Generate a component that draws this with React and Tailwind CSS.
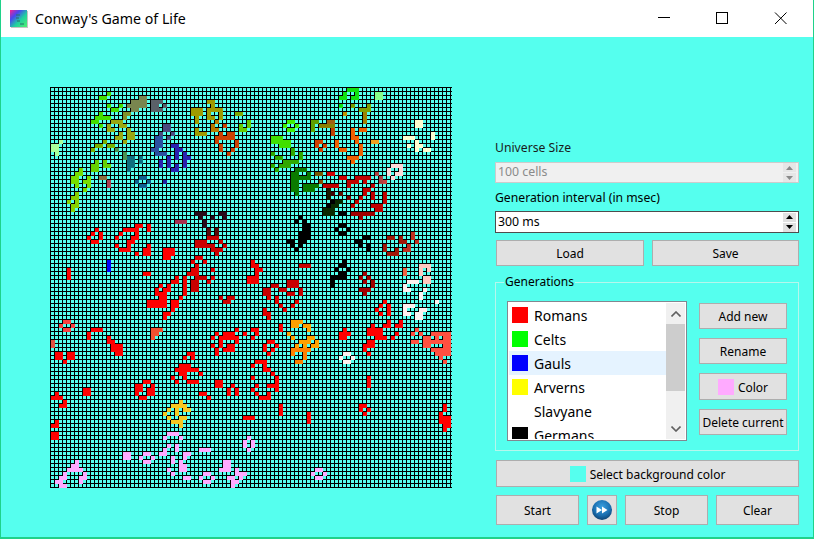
// colour, then "col row w h" runs of live cells
const cells = [
  ["#44dd00", "12 2 2 1,14 1 1 1,14 4 1 1,15 5 2 1,17 4 1 1"],
  ["#44e000", "12 6 1 1,11 7 4 1,10 8 2 1,12 9 1 1"],
  ["#79864f", "22 2 2 3,20 3 2 3,19 4 1 1"],
  ["#80902a", "18 6 2 1,18 7 1 1"],
  ["#5a6068", "25 3 3 1,25 4 2 1,28 4 1 1,25 5 3 1"],
  ["#9f9a00", "35 5 3 2,36 7 1 2,36 10 1 1,36 11 3 1,39 3 2 1,40 4 1 1,39 5 4 1,39 6 1 2,40 7 1 1,42 6 1 2"],
  ["#b87a00", "41 8 1 1,40 9 1 2,41 10 1 1"],
  ["#cc4000", "43 9 1 1,42 11 1 1,44 11 2 1,41 12 4 1,45 12 1 1,41 13 1 1,46 13 1 2,42 14 1 2,45 15 1 1,44 16 1 1"],
  ["#80aa00", "46 6 2 1"],
  ["#66cc00", "47 10 2 1,47 9 1 1,49 8 1 2"],
  ["#9aa810", "15 8 3 1,14 9 1 2,15 10 1 1,17 9 2 1,17 11 1 2,16 12 1 1,19 10 1 1,19 11 2 2,18 13 1 1"],
  ["#aaff99", "0 14 2 2,1 16 1 1,2 13 1 1"],
  ["#78b000", "13 13 1 1,11 14 2 1,14 14 2 1,10 15 1 1"],
  ["#4a9050", "16 15 1 1,18 16 1 2"],
  ["#0f6f80", "19 17 2 3,19 20 1 1,22 17 1 2"],
  ["#66d000", "11 18 1 1,10 19 2 2,13 18 1 1,13 19 2 1"],
  ["#77dd00", "7 20 1 1,6 21 2 1,5 22 2 2,6 24 1 1,8 23 2 1,9 22 1 3,8 25 1 1"],
  ["#88d000", "6 26 1 4,5 27 1 1,4 28 1 1,5 29 2 1,5 30 1 1"],
  ["#8a7040", "12 22 2 1"],
  ["#b04050", "14 23 1 2"],
  ["#0f5f90", "22 22 2 1,21 23 1 1,24 23 1 1,22 24 2 1"],
  ["#2020a0", "28 23 1 1"],
  ["#4a4a80", "28 9 2 2,27 11 1 1,30 11 1 1,29 12 1 1"],
  ["#2a50a0", "26 12 2 3,25 15 2 1,26 16 3 1"],
  ["#2a20b0", "30 14 2 1,31 15 1 3,32 15 1 1,33 16 1 4,34 17 1 1,27 18 1 2,29 17 1 3,31 19 1 2,30 20 2 1"],
  ["#2a0a1a", "36 31 3 1,37 32 1 1,40 32 1 1,42 31 2 1,43 32 1 1,38 33 1 2"],
  ["#a83050", "31 33 3 1"],
  ["#ff0000", "11 35 1 1,10 36 1 1,12 36 1 2,9 37 1 1,10 38 2 1,24 34 1 2,21 34 2 1,18 35 3 1,21 35 1 2,17 36 1 1,16 37 1 1,20 37 2 1,19 38 2 1,19 39 1 1,16 39 1 1,17 40 3 1,21 41 1 1,24 39 1 1,23 40 2 2,28 40 3 2,28 42 2 1,4 45 1 3,23 46 2 1"],
  ["#0000ff", "14 43 1 3"],
  ["#e00000", "36 42 2 1,35 43 1 1,38 43 1 1,36 44 1 1,35 45 2 1,34 46 3 1,40 45 1 1,40 47 1 1,39 48 1 1"],
  ["#c80000", "36 47 3 1,35 48 2 3"],
  ["#ee0000", "33 47 1 5,31 47 1 1,30 48 2 1"],
  ["#5a0808", "39 35 1 2,41 35 1 2"],
  ["#cc0000", "39 37 3 1,36 38 3 2,39 39 2 1,42 38 1 1,43 39 1 1,40 40 3 1,41 41 1 1,42 52 1 1,44 52 2 1,43 53 2 1"],
  ["#ff0000", "49 47 1 2,27 49 1 1,29 49 1 2,26 50 1 2,28 50 1 1,27 51 2 2,32 52 1 1,28 53 1 1,24 53 5 2,30 53 2 2,30 55 1 1,28 56 2 1,28 57 1 1"],
  ["#f84040", "3 58 2 1,2 59 1 1,5 59 1 1,3 60 2 1"],
  ["#ff0000", "10 60 3 1,9 61 1 2,14 62 1 2,15 63 1 3,16 64 2 2,16 66 2 1,46 60 1 1,41 61 1 1,43 61 3 2,40 62 1 1,42 62 1 3,46 62 1 2,48 61 1 1,40 64 1 1,44 64 2 2,41 65 1 1,43 65 1 1"],
  ["#e05040", "0 63 1 2"],
  ["#f05030", "25 60 3 1,25 61 2 1,25 62 1 1"],
  ["#ff0000", "1 66 2 2,4 66 2 2,3 68 1 1,34 66 2 1,33 67 1 1,35 67 1 1,32 69 3 1,31 70 4 1,35 70 2 1,32 71 2 1,37 71 1 1,30 72 1 1,33 72 1 1,31 73 1 1,34 73 3 1,41 66 1 1,41 73 2 2,37 76 2 1,39 77 1 1,44 75 1 2,45 74 1 1,46 75 1 2,23 73 2 1,21 74 2 2,21 76 1 1,22 77 2 1,24 75 2 2,25 74 1 1,8 75 2 2,1 76 1 1,0 77 3 1,3 78 1 1,2 79 2 1,1 83 1 1,0 84 2 1,0 86 2 2,48 82 2 1"],
  ["#f8c820", "32 78 1 1,30 79 4 1,29 80 1 1,33 80 2 1,31 80 1 2,28 81 1 1,29 82 1 1,32 82 2 1,30 83 3 1,32 84 1 1"],
  ["#ffaaff", "29 86 3 1,28 87 1 1,32 87 1 1,29 89 1 1,31 89 1 2,28 90 1 2,27 91 1 1,30 92 1 2,33 91 2 1,33 92 1 1,32 93 1 1,32 94 2 2,29 95 1 1,30 96 1 1,33 97 2 1,18 91 2 2,23 91 2 1,22 92 1 1,25 92 1 1,23 93 2 1,37 90 3 1,6 93 1 1,5 94 2 1,4 95 4 1,3 96 1 1,2 97 2 1,1 98 2 1,2 99 2 1,8 96 1 1,7 97 2 1,7 98 1 1,38 96 2 1,37 97 1 1,40 97 1 1,38 98 2 1,43 93 2 2,42 95 3 1,49 87 1 1,48 88 1 2,49 90 1 1,50 88 1 2,46 95 1 1,46 96 3 1,47 97 1 1,44 97 2 1,45 98 2 1,45 99 1 1,66 95 2 1,65 96 1 1,68 96 1 1,66 97 2 1"],
  ["#000000", "62 32 1 1,61 33 1 1,63 33 1 1,63 34 2 2,62 36 3 2,59 38 2 1,62 38 2 1,60 39 1 1,62 39 1 1,61 40 1 1,72 34 2 1,71 35 1 1,74 35 1 1,72 36 2 1,78 37 2 1,76 38 2 1,77 39 1 1,79 39 1 2,72 31 2 1,73 43 1 1,72 44 2 1,71 45 1 1,74 45 1 1,72 46 2 2,70 47 2 1,70 48 1 2,70 28 3 1,69 29 3 1,68 30 3 1"],
  ["#0a2a00", "71 28 2 1,70 29 2 1,68 30 3 2"],
  ["#a01808", "84 37 2 1,87 37 1 2,88 38 1 1,83 39 1 2,84 41 3 1,86 40 1 1"],
  ["#c03020", "90 36 1 2,91 38 1 1,88 40 2 1,89 39 1 1"],
  ["#a00000", "76 28 1 1,75 29 1 1,80 29 3 1,81 30 2 1,75 31 6 1,77 32 1 1,83 28 1 1,78 46 1 1,77 47 1 1,79 47 1 1,78 48 1 1,80 48 1 2,77 50 3 1,78 51 1 1"],
  ["#f00000", "50 43 1 2,51 44 1 3,52 45 1 1,50 47 2 2"],
  ["#c80000", "62 44 3 1,59 48 3 2,59 51 2 1,62 50 1 2,55 49 2 1,53 50 2 2,57 50 2 1"],
  ["#e00000", "54 52 1 1,56 52 1 2,61 53 1 1,60 54 1 1,57 54 1 1,58 55 1 1,53 55 1 2,54 56 1 2"],
  ["#ff0000", "57 59 1 2,50 60 2 1,51 61 1 1,50 62 1 1,54 63 2 1,53 64 1 2,56 64 1 1,55 65 1 1,54 66 1 1,51 68 3 1,50 69 1 1,53 69 1 2,54 70 1 1,55 71 1 1,56 72 1 4,54 74 2 1,50 72 1 1,51 74 1 1,50 75 1 1,51 76 1 1,52 77 3 1,54 76 1 1,57 79 1 3,64 81 1 3,50 82 1 1"],
  ["#ff0000", "72 61 2 2,73 60 1 1,74 61 1 1,80 59 1 1,79 60 4 2,81 62 3 1,83 59 2 1,84 58 1 1,86 59 2 1,87 58 1 1,86 61 1 1,85 62 1 1,79 63 2 1,80 64 1 1,78 64 1 2,79 64 2 1,79 66 1 1,83 53 1 1,82 54 1 1,84 54 1 3,81 55 1 1,82 56 1 1,79 72 1 3,77 79 2 1,77 80 1 1,79 80 1 1,78 81 1 1,98 79 1 2,97 81 1 3,98 82 2 3,98 85 1 1"],
  ["#ffa000", "60 58 3 1,60 59 2 1,63 59 2 1,64 60 1 1,59 61 1 1,60 62 1 1,64 62 2 1,62 63 3 1,66 63 1 2,65 64 1 1,61 64 1 1,63 64 1 1"],
  ["#ff8000", "60 65 5 1,60 66 1 1,63 66 1 2,61 68 2 1"],
  ["#ff5040", "91 60 1 1,90 61 1 1,92 61 1 1,90 63 2 1,95 61 5 1,93 62 2 2,96 62 1 1,98 62 2 5,95 63 3 1,93 64 2 1,95 65 3 1,96 66 2 1,97 67 1 1,98 68 1 1"],
  ["#ffc8c0", "92 44 3 1,92 45 1 2,94 45 1 1,93 47 2 2"],
  ["#f06040", "88 45 1 2"],
  ["#fff0ee", "89 48 3 1,88 49 1 2,89 50 1 1,93 50 1 1,92 51 1 2,96 53 1 1,88 54 3 1,88 55 1 2,89 56 1 1,93 55 1 1,92 55 1 1,91 56 2 2,73 66 2 1,72 67 1 1,75 67 1 1,73 68 2 1"],
  ["#10e010", "74 0 3 1,76 1 1 2,73 1 1 1,72 2 2 1,75 2 2 1,72 4 1 1"],
  ["#7a9a00", "75 4 1 1"],
  ["#88ff88", "81 1 2 2"],
  ["#80a000", "79 4 1 2,77 5 2 1"],
  ["#a08000", "78 6 1 3"],
  ["#c09000", "73 6 1 1"],
  ["#40f000", "59 8 2 1,58 9 1 1,61 9 1 1,59 10 2 1"],
  ["#60a000", "65 8 2 1,65 9 1 2"],
  ["#8a8000", "67 9 4 1"],
  ["#a06010", "69 8 2 1"],
  ["#c04000", "70 10 1 2"],
  ["#f06000", "75 10 1 3,76 12 1 2,77 10 2 1,71 13 1 2,72 15 2 1,77 14 1 3,74 17 3 1,75 18 1 1"],
  ["#f0a020", "80 13 2 1"],
  ["#d04000", "66 13 2 1,66 14 1 1,68 14 1 1,67 15 1 1"],
  ["#ffffd0", "91 8 2 2,88 12 3 1,89 14 1 1,91 13 1 3,92 14 1 1,93 15 2 1,95 11 1 2"],
  ["#ffd8d8", "85 19 3 1,84 20 1 2,87 20 1 2,86 21 1 1,85 22 1 1"],
  ["#40e000", "55 12 3 2,57 13 3 2"],
  ["#30a800", "60 15 1 2,55 16 1 1,56 17 2 1,58 18 4 1,62 16 1 2,55 19 1 1,57 19 3 1,56 20 1 1"],
  ["#0a7a00", "61 20 3 1,64 21 1 2,61 22 4 1,61 21 1 1,60 21 1 5,61 23 1 3,63 24 3 2,66 24 1 1,61 26 1 1"],
  ["#7a5a00", "66 21 2 1"],
  ["#8a4a00", "67 23 1 1"],
  ["#d00000", "69 21 2 1,72 22 2 1"],
  ["#c00000", "68 24 4 1,76 22 4 1,74 23 3 1,74 24 1 1,78 23 1 1,80 24 1 1,78 25 2 1,78 26 1 1,80 26 1 2,77 27 1 1,76 28 1 1,75 29 1 1,83 26 1 3,80 29 3 1,81 30 2 1"],
  ["#1a1a00", "69 25 1 3"],
  ["#400000", "70 26 1 1"],
  ["#601000", "72 26 1 1"],
  ["#800000", "74 27 1 1"],
  ["#b04040", "81 21 1 1,82 22 1 2"],
  ["#c84040", "83 23 1 1"],
]
  .flatMap(([color, runs]) =>
    runs.split(",").map((r) => {
      const [c, row, w, h] = r.split(" ").map(Number);
      return { color, c, row, w, h };
    })
  );

function Universe() {
  let lines = "";
  for (let i = 0; i <= 100; i++) {
    lines += `M${i * 4 + 0.5} 0V401M0 ${i * 4 + 0.5}H402`;
  }
  return (
    <svg width="402" height="401" className="shrink-0 block">
      <path d={lines} stroke="#000" strokeWidth="1" shapeRendering="crispEdges" fill="none" />
      {cells.map((cell, i) => (
        <rect
          key={i}
          x={cell.c * 4 + 1}
          y={cell.row * 4 + 1}
          width={cell.w * 4}
          height={cell.h * 4}
          fill={cell.color}
          shapeRendering="crispEdges"
        />
      ))}
    </svg>
  );
}

function Btn({ className, children }) {
  return (
    <button className={`flex items-center justify-center bg-[#e1e1e1] border border-[#adadad] pt-[2px] text-[12px] text-black ${className}`}>
      {children}
    </button>
  );
}

function Spin({ disabled, text }) {
  const arrow = disabled ? "#8a8a8a" : "#000";
  return (
    <div className={`flex items-center justify-between border pl-[2px] pr-px ${disabled ? "h-[21px] bg-[#f0f0f0] border-[#cccccc] text-[#8a8a8a]" : "h-[22px] bg-white border-[#4d4d4d] text-black"}`}>
      <span className="text-[12.3px]">{text}</span>
      <div className="flex flex-col gap-px mr-px">
        <div className={`w-[13px] h-[9px] flex items-center justify-center ${disabled ? "bg-[#e6e6e6]" : "bg-[#e1e1e1]"}`}>
          <svg width="7" height="4"><polygon points="0,4 3.5,0 7,4" fill={arrow} /></svg>
        </div>
        <div className={`w-[13px] h-[9px] flex items-center justify-center ${disabled ? "bg-[#e6e6e6]" : "bg-[#e1e1e1]"}`}>
          <svg width="7" height="4"><polygon points="0,0 3.5,4 7,0" fill={arrow} /></svg>
        </div>
      </div>
    </div>
  );
}

const generations = [
  { name: "Romans", color: "bg-[#ff0000]" },
  { name: "Celts", color: "bg-[#00ff00]" },
  { name: "Gauls", color: "bg-[#0000ff]", selected: true },
  { name: "Arverns", color: "bg-[#ffff00]" },
  { name: "Slavyane", color: "bg-white" },
  { name: "Germans", color: "bg-black" },
];

export default function App() {
  return (
    <div className="w-[815px] h-[541px] bg-white overflow-hidden font-['Noto_Sans',sans-serif]">
      <div className="w-[814px] h-[539px] border-l border-r border-b-2 border-[#1fd28a] bg-[#55ffee] flex flex-col">
        <div className="h-[37px] bg-white flex items-center shrink-0">
          <svg width="18" height="18" className="ml-[9px] mr-[7px]">
            <defs>
              <linearGradient id="ico" x1="0" y1="0" x2="1" y2="1">
                <stop offset="0" stopColor="#ff2090" />
                <stop offset="0.3" stopColor="#4848f0" />
                <stop offset="0.6" stopColor="#20d0a0" />
                <stop offset="1" stopColor="#50f070" />
              </linearGradient>
            </defs>
            <rect x="1" y="1" width="17" height="17" fill="#c4c4c4" />
            <rect width="17" height="17" fill="url(#ico)" />
            <path d="M6 5h4M6 8h3M7 11h3M10 14h4" stroke="#2a6a6a" strokeWidth="1" />
          </svg>
          <span className="text-[14.2px] text-black">Conway's Game of Life</span>
          <div className="ml-auto flex items-center">
            <svg width="130" height="14" viewBox="0 0 130 14" className="mr-[25px]">
              <path d="M0 5.5H12" stroke="#000" shapeRendering="crispEdges" />
              <rect x="58.5" y="0.5" width="11" height="11" fill="none" stroke="#000" shapeRendering="crispEdges" />
              <path d="M117 0.5L128.5 12M128.5 0.5L117 12" stroke="#000" fill="none" />
            </svg>
          </div>
        </div>

        <div className="flex pl-[49px] pt-[50px]">
          <Universe />
          <div className="w-[304px] ml-[43px] mt-[53px] flex flex-col">
            <div className="h-4 flex items-center text-[12.2px] text-[#1a1a1a]">Universe Size</div>
            <div className="mt-[6px]"><Spin disabled text="100 cells" /></div>
            <div className="mt-[7px] h-4 flex items-center text-[12.2px] text-black">Generation interval (in msec)</div>
            <div className="mt-[5px]"><Spin text="300 ms" /></div>
            <div className="mt-[7px] pl-px flex gap-2">
              <Btn className="w-[148px] h-[26px]">Load</Btn>
              <Btn className="w-[147px] h-[26px]">Save</Btn>
            </div>

            <div className="relative mt-4 h-[169px] border border-[#b5f7ec] pl-[11px] pt-[18px] flex">
              <span className="absolute left-[8px] -top-[10px] px-px bg-[#55ffee] text-[12px] text-black">Generations</span>
              <div className="w-[180px] h-[140px] border border-[#828790] bg-white p-px flex">
                <div className="flex-1 overflow-hidden">
                  {generations.map((g) => (
                    <div key={g.name} className={`h-6 flex items-center pl-[3px] ${g.selected ? "bg-[#e5f3ff]" : ""}`}>
                      <div className={`w-4 h-4 ${g.color}`} />
                      <span className="ml-[6px] text-[14px] text-black">{g.name}</span>
                    </div>
                  ))}
                </div>
                <div className="w-[19px] bg-[#f0f0f0] flex flex-col items-center">
                  <div className="h-[21px] flex items-center justify-center">
                    <svg width="10" height="6"><path d="M0.5 5.5L5 1L9.5 5.5" stroke="#606060" strokeWidth="1.6" fill="none" /></svg>
                  </div>
                  <div className="w-full h-[67px] bg-[#cdcdcd]" />
                  <div className="mt-auto h-[20px] flex items-center justify-center">
                    <svg width="10" height="6"><path d="M0.5 0.5L5 5L9.5 0.5" stroke="#606060" strokeWidth="1.6" fill="none" /></svg>
                  </div>
                </div>
              </div>
              <div className="ml-3 mt-[2px] flex flex-col gap-[9px]">
                <Btn className="w-[88px] h-[26px]">Add new</Btn>
                <Btn className="w-[88px] h-[26px]">Rename</Btn>
                <Btn className="w-[88px] h-[27px] gap-1">
                  <span className="w-4 h-4 bg-[#ffaaff] -mt-px" />
                  Color
                </Btn>
                <Btn className="w-[88px] h-[26px]">Delete current</Btn>
              </div>
            </div>

            <Btn className="mt-[9px] ml-px w-[303px] h-[27px] gap-1">
              <span className="w-4 h-4 bg-[#55ffee] -mt-px" />
              Select background color
            </Btn>

            <div className="mt-2 ml-px flex gap-2">
              <Btn className="w-[83px] h-[30px]">Start</Btn>
              <Btn className="w-[30px] h-[30px] !pt-0">
                <svg width="20" height="20" viewBox="0 0 20 20">
                  <defs>
                    <radialGradient id="ff" cx="0.5" cy="0.35" r="0.7">
                      <stop offset="0" stopColor="#3aa0e0" />
                      <stop offset="0.6" stopColor="#1a6fb0" />
                      <stop offset="1" stopColor="#0c3a66" />
                    </radialGradient>
                  </defs>
                  <circle cx="10" cy="10" r="10" fill="url(#ff)" />
                  <path d="M4.5 6.5L10 10L4.5 13.5ZM10 6.5L15.5 10L10 13.5Z" fill="#fff" />
                </svg>
              </Btn>
              <Btn className="w-[83px] h-[30px]">Stop</Btn>
              <Btn className="w-[83px] h-[30px]">Clear</Btn>
            </div>
          </div>
        </div>
      </div>
    </div>
  );
}
